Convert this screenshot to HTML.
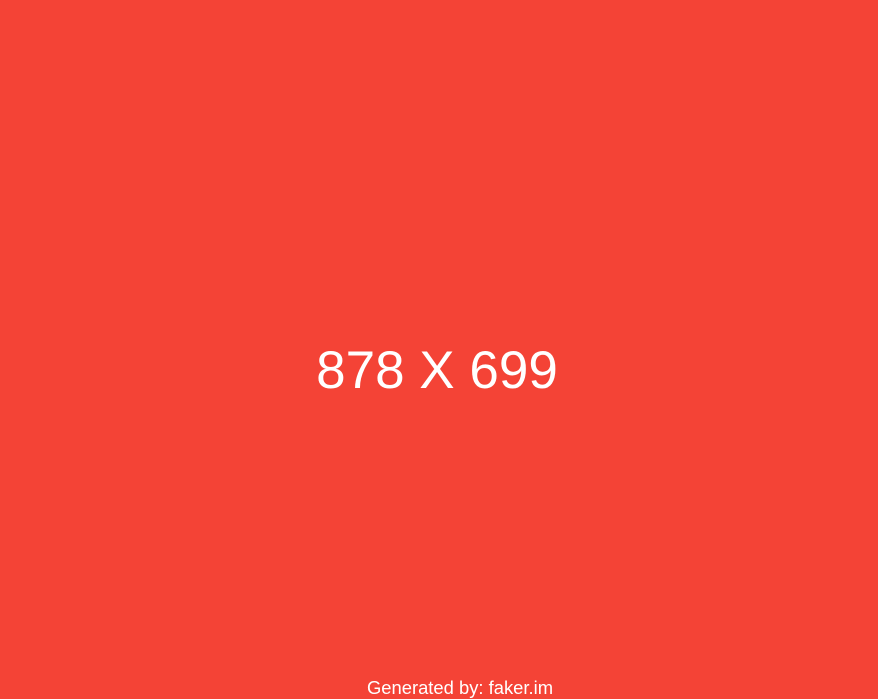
<!DOCTYPE html>
<html><head><style>
html,body{margin:0;padding:0;}
body{width:878px;height:699px;background:#f44336;position:relative;overflow:hidden;font-family:"Liberation Sans",sans-serif;color:#fff;}
.m{position:absolute;left:0;width:874px;text-align:center;top:341px;font-size:53px;line-height:60px;}
.f{position:absolute;left:0;width:920px;text-align:center;top:677px;font-size:18.4px;line-height:22px;}
</style></head><body>
<div class="m">878 X 699</div>
<div class="f">Generated by: faker.im</div>
</body></html>
